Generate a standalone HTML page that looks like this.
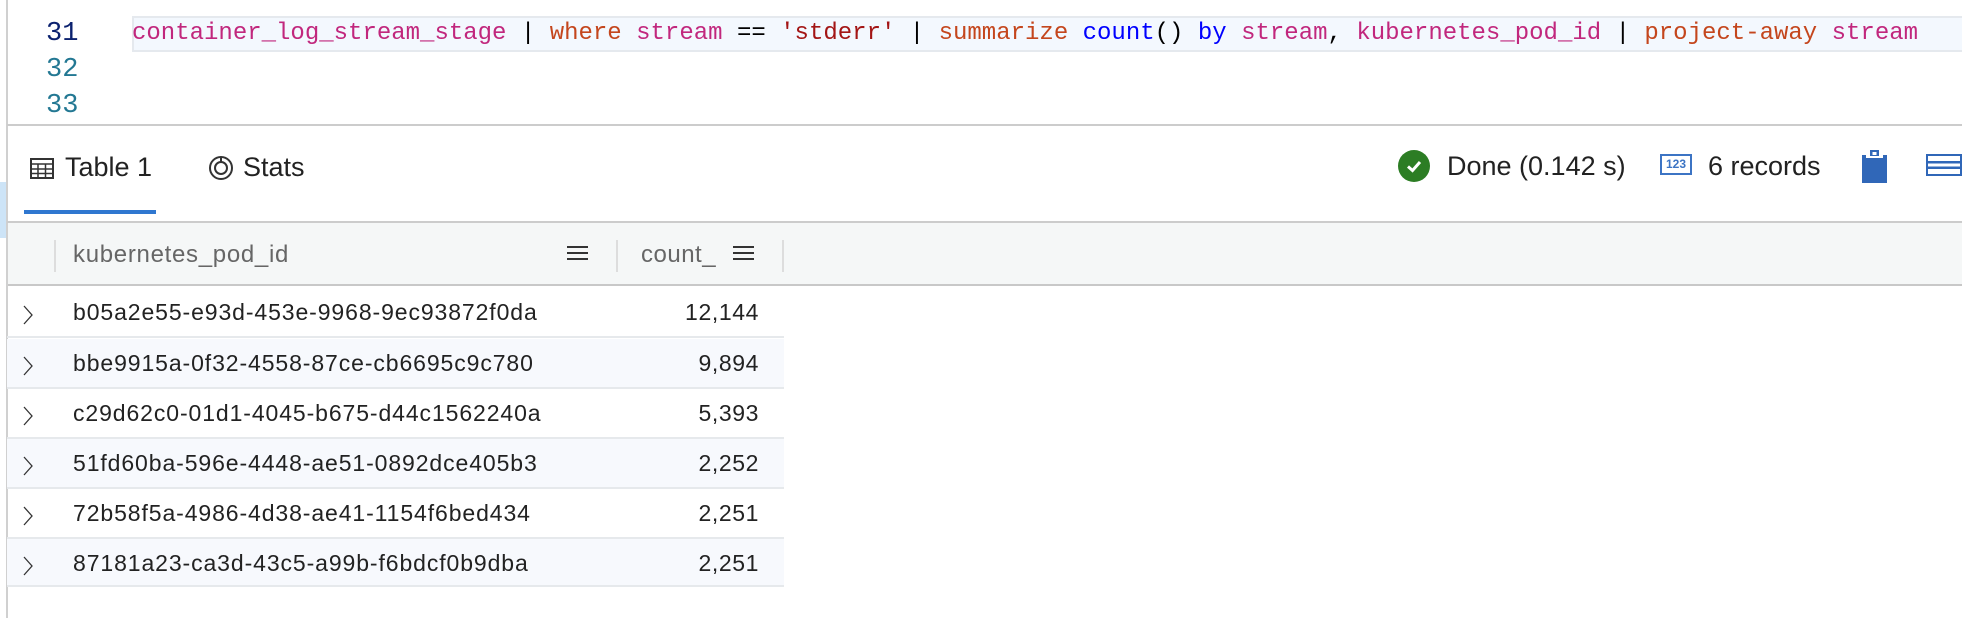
<!DOCTYPE html>
<html><head><meta charset="utf-8"><style>
*{margin:0;padding:0;box-sizing:border-box}
body{width:1962px;height:618px;background:#fff;position:relative;overflow:hidden;font-family:"Liberation Sans",sans-serif}
.a{position:absolute}
.ln{font-family:"Liberation Mono",monospace;font-size:27px;color:#237893;left:46px;line-height:30px}
.code{font-family:"Liberation Mono",monospace;font-size:24px;white-space:pre;left:132px;top:17px;line-height:34px}
.m{color:#c1277d}.o{color:#c4461d}.s{color:#a31515}.b{color:#0000ff}.k{color:#000}
.row{position:absolute;left:7px;width:777px;height:50px;border-bottom:2px solid #e6e9ec}
.row .t{position:absolute;left:66px;top:11px;font-size:23px;letter-spacing:0.9px;color:#222}
.row .n{position:absolute;right:25px;top:11px;font-size:23px;letter-spacing:0.6px;color:#222}
.row svg{position:absolute;left:15px;top:17px}
</style></head><body>
<div class="a" style="left:6px;top:0;width:2px;height:618px;background:#d0d0d0"></div>
<div class="a" style="left:0;top:182px;width:6px;height:56px;background:#cde4f7"></div>
<div class="a ln" style="top:-22px">30</div>
<div class="a ln" style="top:19px;color:#0b216f">31</div>
<div class="a ln" style="top:55px">32</div>
<div class="a ln" style="top:91px">33</div>
<div class="a" style="left:132px;top:16px;width:1830px;height:36px;background:#f3f8fe;border:2px solid #e5e9ee;border-right:none"></div>
<div class="a code"><span class="m">container_log_stream_stage</span> <span class="k">|</span> <span class="o">where</span> <span class="m">stream</span> <span class="k">==</span> <span class="s">'stderr'</span> <span class="k">|</span> <span class="o">summarize</span> <span class="b">count</span><span class="k">()</span> <span class="b">by</span> <span class="m">stream</span><span class="k">,</span> <span class="m">kubernetes_pod_id</span> <span class="k">|</span> <span class="o">project-away</span> <span class="m">stream</span></div>
<div class="a" style="left:7px;top:124px;width:1955px;height:2px;background:#ccc"></div>
<svg class="a" style="left:30px;top:158px" width="24" height="21" viewBox="0 0 24 21"><rect x="1" y="1" width="22" height="19" fill="none" stroke="#333" stroke-width="2"/><path d="M1 6H23M1 11H23M1 15.5H23M8 6V20M15.5 6V20" stroke="#333" stroke-width="1.5"/></svg>
<div class="a" style="left:65px;top:152px;font-size:27px;color:#222">Table 1</div>
<svg class="a" style="left:208px;top:155px" width="26" height="26" viewBox="0 0 26 26"><circle cx="13" cy="13" r="11" fill="none" stroke="#333" stroke-width="2"/><circle cx="13" cy="13" r="6" fill="none" stroke="#333" stroke-width="2"/><path d="M13 2V7" stroke="#333" stroke-width="2"/></svg>
<div class="a" style="left:243px;top:152px;font-size:27px;color:#222">Stats</div>
<div class="a" style="left:24px;top:210px;width:132px;height:4px;background:#2f77d0"></div>
<svg class="a" style="left:1398px;top:150px" width="32" height="32"><circle cx="16" cy="16" r="16" fill="#2c7d24"/><path d="M10 16.5L14.5 20.5L22 12" stroke="#fff" stroke-width="3" fill="none"/></svg>
<div class="a" style="left:1447px;top:151px;font-size:27px;color:#222">Done (0.142 s)</div>
<div class="a" style="left:1660px;top:154px;width:32px;height:21px;border:2px solid #3c74c4;color:#3c74c4;font-size:12px;font-weight:bold;text-align:center;line-height:17px">123</div>
<div class="a" style="left:1708px;top:151px;font-size:27px;color:#222">6 records</div>
<svg class="a" style="left:1862px;top:150px" width="25" height="33"><rect x="0" y="5" width="25" height="28" fill="#3067b8"/><path d="M4 5H21V8H4Z" fill="#fff"/><rect x="8" y="0" width="9" height="6" fill="#3067b8"/><rect x="10.5" y="2" width="4" height="3" fill="#fff"/></svg>
<svg class="a" style="left:1926px;top:154px" width="36" height="22"><rect x="1" y="1" width="34" height="20" fill="none" stroke="#3067b8" stroke-width="2"/><rect x="1" y="7" width="34" height="2.5" fill="#3067b8"/><rect x="1" y="12.5" width="34" height="2.5" fill="#3067b8"/></svg>
<div class="a" style="left:7px;top:221px;width:1955px;height:2px;background:#ccc"></div>
<div class="a" style="left:8px;top:223px;width:1954px;height:63px;background:#f5f7f7;border-bottom:2px solid #c8c8c8"></div>
<div class="a" style="left:54px;top:240px;width:2px;height:32px;background:#ddd"></div>
<div class="a" style="left:73px;top:241px;font-size:24px;color:#666;letter-spacing:0.7px">kubernetes_pod_id</div>
<svg class="a" style="left:567px;top:245px" width="21" height="16"><path d="M0 2H21M0 8H21M0 14H21" stroke="#333" stroke-width="2"/></svg>
<div class="a" style="left:616px;top:240px;width:2px;height:32px;background:#ddd"></div>
<div class="a" style="left:641px;top:241px;font-size:24px;color:#666;letter-spacing:0.5px">count_</div>
<svg class="a" style="left:733px;top:245px" width="21" height="16"><path d="M0 2H21M0 8H21M0 14H21" stroke="#333" stroke-width="2"/></svg>
<div class="a" style="left:782px;top:240px;width:2px;height:32px;background:#ddd"></div>
<div class="row" style="top:288px"><svg width="12" height="20"><path d="M2 1L10 10L2 19" stroke="#333" stroke-width="1.3" fill="none"/></svg><span class="t">b05a2e55-e93d-453e-9968-9ec93872f0da</span><span class="n">12,144</span></div>
<div class="row" style="top:339px;background:#f7f9fd"><svg width="12" height="20"><path d="M2 1L10 10L2 19" stroke="#333" stroke-width="1.3" fill="none"/></svg><span class="t">bbe9915a-0f32-4558-87ce-cb6695c9c780</span><span class="n">9,894</span></div>
<div class="row" style="top:389px"><svg width="12" height="20"><path d="M2 1L10 10L2 19" stroke="#333" stroke-width="1.3" fill="none"/></svg><span class="t">c29d62c0-01d1-4045-b675-d44c1562240a</span><span class="n">5,393</span></div>
<div class="row" style="top:439px;background:#f7f9fd"><svg width="12" height="20"><path d="M2 1L10 10L2 19" stroke="#333" stroke-width="1.3" fill="none"/></svg><span class="t">51fd60ba-596e-4448-ae51-0892dce405b3</span><span class="n">2,252</span></div>
<div class="row" style="top:489px"><svg width="12" height="20"><path d="M2 1L10 10L2 19" stroke="#333" stroke-width="1.3" fill="none"/></svg><span class="t">72b58f5a-4986-4d38-ae41-1154f6bed434</span><span class="n">2,251</span></div>
<div class="row" style="top:539px;height:48px;background:#f7f9fd"><svg width="12" height="20"><path d="M2 1L10 10L2 19" stroke="#333" stroke-width="1.3" fill="none"/></svg><span class="t">87181a23-ca3d-43c5-a99b-f6bdcf0b9dba</span><span class="n">2,251</span></div>
</body></html>
